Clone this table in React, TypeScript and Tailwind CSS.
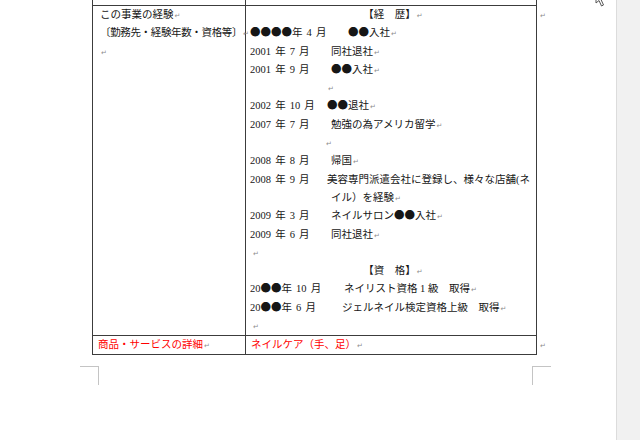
const Mark = () => (
  <span className="ml-[1px] font-['DejaVu_Sans'] text-[7px] leading-none text-[#8c8c8c]">↵</span>
);

const Dot = ({ n }: { n: number }) => (
  <span className="font-['Noto_Sans_CJK_JP'] leading-none">{"●".repeat(n)}</span>
);

type Entry = {
  date: React.ReactNode;
  w: string;
  desc: React.ReactNode;
  mark?: boolean;
};

const history: Entry[] = [
  { date: <><Dot n={4} />年 4 月</>, w: "w-[98px]", desc: <><Dot n={2} />入社</> },
  { date: "2001 年 7 月", w: "w-[81px]", desc: "同社退社" },
  { date: "2001 年 9 月", w: "w-[81px]", desc: <><Dot n={2} />入社</> },
];

function Line({ className = "", children }: { className?: string; children?: React.ReactNode }) {
  return <div className={`h-[18.3px] whitespace-nowrap ${className}`}>{children}</div>;
}

function Row({ date, w, desc, mark = true }: Entry) {
  return (
    <Line className="flex">
      <span className={`${w} shrink-0 [word-spacing:1.5px]`}>{date}</span>
      <span>
        {desc}
        {mark && <Mark />}
      </span>
    </Line>
  );
}

export default function App() {
  return (
    <div className="flex h-[440px] w-[640px] overflow-hidden bg-white font-['Liberation_Serif','Noto_Sans_CJK_JP',serif] text-[10.5px] text-[#161616]">
      {/* page */}
      <div className="relative w-[617px] shrink-0 border-r border-[#dcdcdc] bg-white">
        {/* mouse cursor */}
        <svg className="absolute left-[595px] top-[-9px]" width="12" height="16" viewBox="0 0 12 16">
          <path d="M1 1 L1 12 L4 9.5 L6.5 15 L8.5 14 L6 8.5 L10 8.5 Z" fill="#fff" stroke="#555" strokeWidth="1" />
        </svg>

        <div className="ml-[92px] w-[445px] border-x border-[#3c3c3c] leading-[18.3px]">
          {/* end of previous row */}
          <div className="flex h-[6px] border-b border-[#3c3c3c]">
            <div className="w-[153px] border-r border-[#3c3c3c]" />
          </div>

          {/* experience row */}
          <div className="relative flex h-[330px] border-b border-[#3c3c3c]">
            <div className="w-[153px] shrink-0 border-r border-[#3c3c3c] pl-[7px]">
              <Line>この事業の経験<Mark /></Line>
              <Line className="tracking-[-0.35px]">〔勤務先・経験年数・資格等〕<Mark /></Line>
              <Line><Mark /></Line>
            </div>
            <div className="flex-1 pl-[4px]">
              <Line className="text-center">【経　歴】<Mark /></Line>
              {history.map((e, i) => (
                <Row key={i} {...e} />
              ))}
              <Line className="pl-[77px]"><Mark /></Line>
              <Row date="2002 年 10 月" w="w-[77px]" desc={<><Dot n={2} />退社</>} />
              <Row date="2007 年 7 月" w="w-[81px]" desc="勉強の為アメリカ留学" />
              <Line className="pl-[75px]"><Mark /></Line>
              <Row date="2008 年 8 月" w="w-[81px]" desc="帰国" />
              <Row date="2008 年 9 月" w="w-[77px]" desc="美容専門派遣会社に登録し、様々な店舗(ネ" mark={false} />
              <Line className="pl-[81px]">イル）を経験<Mark /></Line>
              <Row date="2009 年 3 月" w="w-[81px]" desc={<>ネイルサロン<Dot n={2} />入社</>} />
              <Row date="2009 年 6 月" w="w-[81px]" desc="同社退社" />
              <Line className="pl-[2px]"><Mark /></Line>
              <Line className="text-center">【資　格】<Mark /></Line>
              <Row date={<>20<Dot n={2} />年 10 月</>} w="w-[94px]" desc="ネイリスト資格 1 級　取得" />
              <Row date={<>20<Dot n={2} />年 6 月</>} w="w-[92px]" desc="ジェルネイル検定資格上級　取得" />
              <Line className="pl-[2px]"><Mark /></Line>
            </div>
            <span className="absolute left-full top-[0px] ml-[3px]"><Mark /></span>
          </div>

          {/* product row */}
          <div className="relative flex h-[19px] border-b border-[#3c3c3c] text-[#ff0000]">
            <div className="w-[153px] shrink-0 whitespace-nowrap border-r border-[#3c3c3c] pl-[5px]">
              商品・サービスの詳細<Mark />
            </div>
            <div className="flex-1 whitespace-nowrap pl-[5px]">
              ネイルケア（手、足）<Mark />
            </div>
            <span className="absolute left-full top-[0px] ml-[3px]"><Mark /></span>
          </div>
        </div>

        {/* margin corner marks */}
        <div className="ml-[80px] mt-[11px] flex w-[471px] justify-between">
          <div className="h-[19px] w-[19px] border-r border-t border-[#c4c4c4]" />
          <div className="h-[19px] w-[19px] border-l border-t border-[#c4c4c4]" />
        </div>
      </div>

      {/* grey side strip */}
      <div className="flex-1 bg-[#f1f1f1]" />
    </div>
  );
}
